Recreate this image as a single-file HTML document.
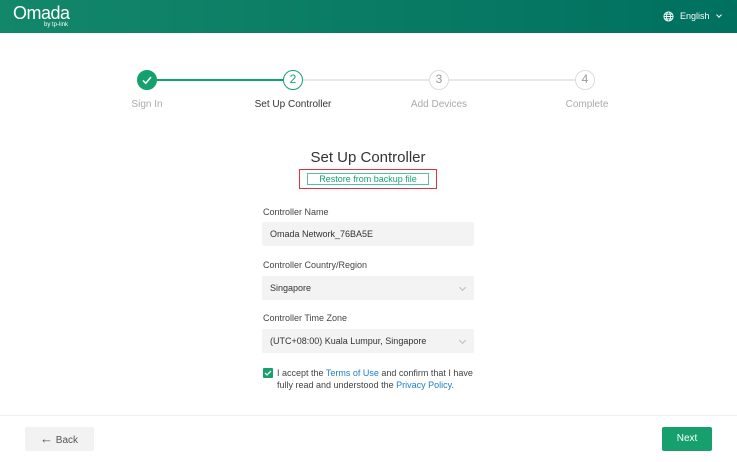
<!DOCTYPE html>
<html><head><style>
*{margin:0;padding:0;box-sizing:border-box}
body{width:737px;height:462px;background:#fff;font-family:"Liberation Sans",sans-serif;position:relative;overflow:hidden;color:#333}
.hdr{position:absolute;left:0;top:0;width:737px;height:33px;background:linear-gradient(90deg,#13876a,#00705f)}
.abs{position:absolute}
.c{position:absolute;width:20px;height:20px;border-radius:50%;text-align:center;line-height:17px;font-size:12px;color:#999;border:1.5px solid #ddd;background:#fff}
.ln{position:absolute;height:2px;top:79px}
.sl{position:absolute;top:99px;font-size:10px;color:#aaa;width:120px;text-align:center}
.lab{position:absolute;left:263px;font-size:9px;color:#444}
.inp{position:absolute;left:262px;width:212px;height:24px;background:#f3f3f3;border-radius:2px;font-size:9px;line-height:24px;padding-left:8px;color:#333}
.chev{position:absolute;right:9px;top:9px;width:5px;height:5px;border-right:1px solid #bbb;border-bottom:1px solid #bbb;transform:rotate(45deg)}
a{color:#1e7ec8;text-decoration:none}
</style></head><body>
<div class="hdr">
<div class="abs" style="left:13px;top:3px;color:#fff;font-size:18px;letter-spacing:-0.5px">Omada</div>
<div class="abs" style="left:44px;top:22px;color:#fff;font-size:6px">by tp-link</div>
<svg class="abs" style="left:663px;top:11px" width="11" height="11" viewBox="0 0 12 12" fill="none" stroke="#fff" stroke-width="1"><circle cx="6" cy="6" r="5"/><ellipse cx="6" cy="6" rx="2.2" ry="5"/><path d="M1 6h10M2 3.5h8M2 8.5h8"/></svg>
<div class="abs" style="left:680px;top:11px;color:#fff;font-size:9px">English</div>
<div class="abs" style="left:717px;top:13px;width:4px;height:4px;border-right:1px solid #fff;border-bottom:1px solid #fff;transform:rotate(45deg)"></div>
</div>
<div class="ln" style="left:157px;width:127px;background:#14a06d"></div>
<div class="ln" style="left:303px;width:127px;background:#e8e8e8"></div>
<div class="ln" style="left:449px;width:127px;background:#e8e8e8"></div>
<div class="c" style="left:137px;top:70px;background:#16a06d;border-color:#16a06d"><svg width="12" height="12" viewBox="0 0 12 12" style="margin-top:3px"><path d="M2 6.5l2.8 2.8L10 3" stroke="#fff" stroke-width="1.5" fill="none"/></svg></div>
<div class="c" style="left:283px;top:70px;border-color:#16a06d;color:#16a06d">2</div>
<div class="c" style="left:429px;top:70px">3</div>
<div class="c" style="left:575px;top:70px">4</div>
<div class="sl" style="left:87px">Sign In</div>
<div class="sl" style="left:233px;color:#333">Set Up Controller</div>
<div class="sl" style="left:379px">Add Devices</div>
<div class="sl" style="left:527px">Complete</div>
<div class="abs" style="left:268px;top:149px;width:200px;text-align:center;font-size:15px;color:#333">Set Up Controller</div>
<div class="abs" style="left:299px;top:169px;width:138px;height:20px;border:1px solid #d9343f"></div>
<div class="abs" style="left:307px;top:173px;width:122px;height:12px;border:1px solid #4fc39a;font-size:9px;color:#17a070;text-align:center;line-height:10px">Restore from backup file</div>
<div class="lab" style="top:207px">Controller Name</div>
<div class="inp" style="top:222px">Omada Network_76BA5E</div>
<div class="lab" style="top:260px">Controller Country/Region</div>
<div class="inp" style="top:276px">Singapore<div class="chev"></div></div>
<div class="lab" style="top:313px">Controller Time Zone</div>
<div class="inp" style="top:329px">(UTC+08:00) Kuala Lumpur, Singapore<div class="chev"></div></div>
<div class="abs" style="left:263px;top:368px;width:10px;height:10px;background:#16a06d;border-radius:1px"><svg width="10" height="10" viewBox="0 0 10 10" class="abs"><path d="M2 5l2 2 4-4" stroke="#fff" stroke-width="1.3" fill="none"/></svg></div>
<div class="abs" style="left:277px;top:367px;font-size:9px;line-height:12px;color:#444;width:200px">I accept the <a>Terms of Use</a> and confirm that I have fully read and understood the <a>Privacy Policy.</a></div>
<div class="abs" style="left:0;top:415px;width:737px;height:1px;background:#eee"></div>
<div class="abs" style="left:25px;top:427px;width:69px;height:24px;background:#f2f2f2;border-radius:2px;font-size:10px;color:#555;line-height:24px;padding-left:15px"><span style="font-size:13px">&#8592;</span> Back</div>
<div class="abs" style="left:662px;top:427px;width:50px;height:24px;background:#16a06d;border-radius:2px;font-size:10px;color:#fff;line-height:24px;text-align:center">Next</div>
</body></html>
